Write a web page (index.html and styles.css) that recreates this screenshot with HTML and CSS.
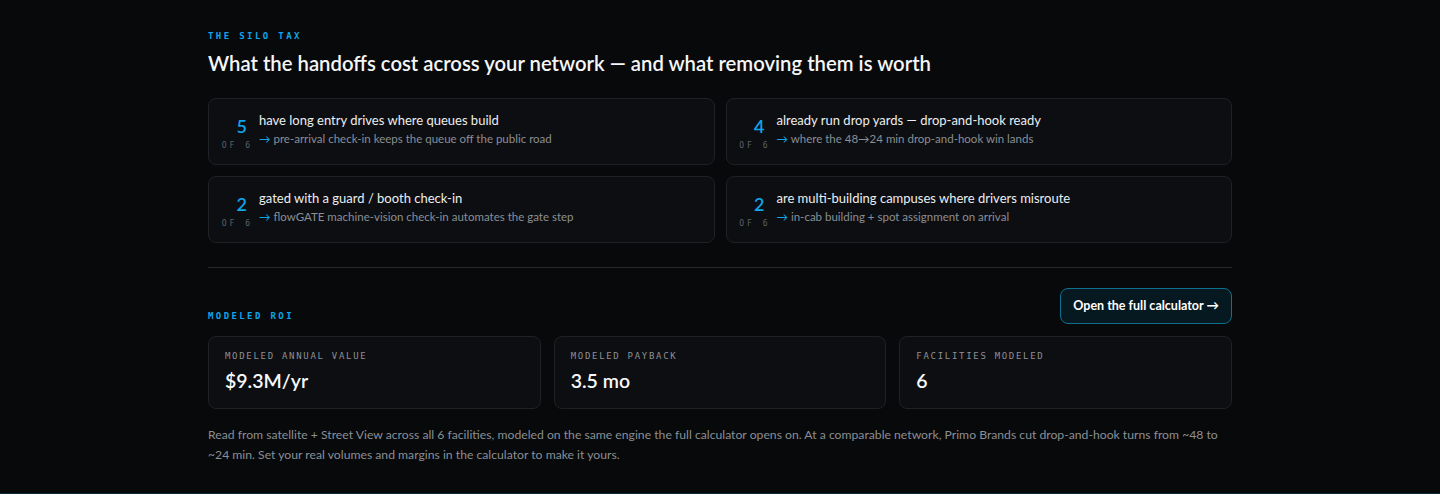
FILE: index.html
```html
<!DOCTYPE html>
<html lang="en">

<head>
    <meta charset="UTF-8">
    <meta name="viewport" content="width=device-width, initial-scale=1.0">
    <title>The Silo Tax</title>
    <link rel="stylesheet" href="styles.css">
</head>

<body>
    <section class="silo">
        <div class="eyebrow">The silo tax</div>
        <h2>What the handoffs cost across your network — and what removing them is worth</h2>

        <div class="findings">
            <div class="finding">
                <div class="count"><b>5</b><span>of 6</span></div>
                <div class="finding-text">
                    <p class="title">have long entry drives where queues build</p>
                    <p class="fix"><i>→</i> pre-arrival check-in keeps the queue off the public road</p>
                </div>
            </div>
            <div class="finding">
                <div class="count"><b>4</b><span>of 6</span></div>
                <div class="finding-text">
                    <p class="title">already run drop yards — drop-and-hook ready</p>
                    <p class="fix"><i>→</i> where the 48→24 min drop-and-hook win lands</p>
                </div>
            </div>
            <div class="finding">
                <div class="count"><b>2</b><span>of 6</span></div>
                <div class="finding-text">
                    <p class="title">gated with a guard / booth check-in</p>
                    <p class="fix"><i>→</i> flowGATE machine-vision check-in automates the gate step</p>
                </div>
            </div>
            <div class="finding">
                <div class="count"><b>2</b><span>of 6</span></div>
                <div class="finding-text">
                    <p class="title">are multi-building campuses where drivers misroute</p>
                    <p class="fix"><i>→</i> in-cab building + spot assignment on arrival</p>
                </div>
            </div>
        </div>

        <hr class="divider">

        <div class="roi-head">
            <div class="eyebrow">Modeled ROI</div>
            <a class="calc-btn" href="#">Open the full calculator →</a>
        </div>

        <div class="metrics">
            <div class="metric">
                <div class="metric-label">Modeled annual value</div>
                <div class="metric-value">$9.3M/yr</div>
            </div>
            <div class="metric">
                <div class="metric-label">Modeled payback</div>
                <div class="metric-value">3.5 mo</div>
            </div>
            <div class="metric">
                <div class="metric-label">Facilities modeled</div>
                <div class="metric-value">6</div>
            </div>
        </div>

        <p class="note">Read from satellite + Street View across all 6 facilities, modeled on the same engine the full calculator opens on. At a comparable network, Primo Brands cut drop-and-hook turns from ~48 to ~24 min. Set your real volumes and margins in the calculator to make it yours.</p>
    </section>
</body>

</html>
```

FILE: styles.css
```css
body {
    background: #08090b;
    color: #f2f3f5;
    font-family: Lato, "Noto Sans", Arial, sans-serif;
    margin: 0;
    height: 494px;
    box-sizing: border-box;
    border-bottom: 1px solid #0c2a36;
    overflow: hidden;
}

.silo {
    width: 1024px;
    margin: 0 auto;
    padding-top: 31px;
}

.eyebrow {
    font-family: "DejaVu Sans Mono", "Liberation Mono", monospace;
    font-size: 9px;
    font-weight: 600;
    letter-spacing: 2.4px;
    text-transform: uppercase;
    color: #0ea5e9;
}

h2 {
    font-size: 20.3px;
    font-weight: 600;
    margin: 10px 0 23px;
    color: #f5f6f7;
}

.findings {
    display: grid;
    grid-template-columns: 1fr 1fr;
    gap: 11px 11px;
}

.finding {
    display: flex;
    align-items: flex-start;
    background: #0d0e11;
    border: 1px solid #1f2125;
    border-radius: 8px;
    height: 67px;
    box-sizing: border-box;
    padding-top: 12px;
}

.count {
    width: 41px;
    flex-shrink: 0;
    text-align: right;
    margin-top: 3px;
}

.count b {
    display: block;
    font-size: 18px;
    font-weight: 600;
    color: #0ea5e9;
    line-height: 24px;
    padding-right: 3px;
}

.count span {
    display: block;
    font-family: "DejaVu Sans Mono", "Liberation Mono", monospace;
    font-size: 8px;
    letter-spacing: 3px;
    text-transform: uppercase;
    color: #5d6168;
    margin-right: -3px;
    margin-top: 3px;
}

.finding-text {
    padding-left: 9px;
}

.finding-text p {
    margin: 0;
}

.title {
    font-size: 13px;
    color: #eceef0;
    line-height: 18px;
}

.fix {
    font-size: 11.5px;
    color: #8a8e95;
    margin-top: 2px !important;
    line-height: 16px;
}

.fix i {
    font-style: normal;
    color: #0ea5e9;
}

.divider {
    border: none;
    border-top: 1px solid #26282c;
    margin: 24px 0 0;
}

.roi-head {
    display: flex;
    justify-content: space-between;
    align-items: flex-end;
    margin-top: 20px;
}

.roi-head .eyebrow {
    padding-bottom: 3px;
}

.calc-btn {
    display: inline-block;
    padding: 9px 12px;
    border: 1px solid #0e6f8f;
    background: #061820;
    border-radius: 8px;
    color: #fff;
    font-size: 12.5px;
    font-weight: 700;
    text-decoration: none;
    line-height: 16px;
}

.metrics {
    display: grid;
    grid-template-columns: repeat(3, 1fr);
    gap: 13px;
    margin-top: 12px;
}

.metric {
    background: #0d0e11;
    border: 1px solid #1f2125;
    border-radius: 8px;
    height: 73px;
    box-sizing: border-box;
    padding: 14px 16px;
}

.metric-label {
    font-family: "DejaVu Sans Mono", "Liberation Mono", monospace;
    font-size: 9px;
    letter-spacing: 1.7px;
    text-transform: uppercase;
    color: #8d9096;
}

.metric-value {
    font-size: 19.5px;
    font-weight: 600;
    color: #f7f8f9;
    margin-top: 8px;
}

.note {
    font-size: 12.2px;
    line-height: 20px;
    color: #8a8e95;
    margin: 16px 0 0;
}
```
